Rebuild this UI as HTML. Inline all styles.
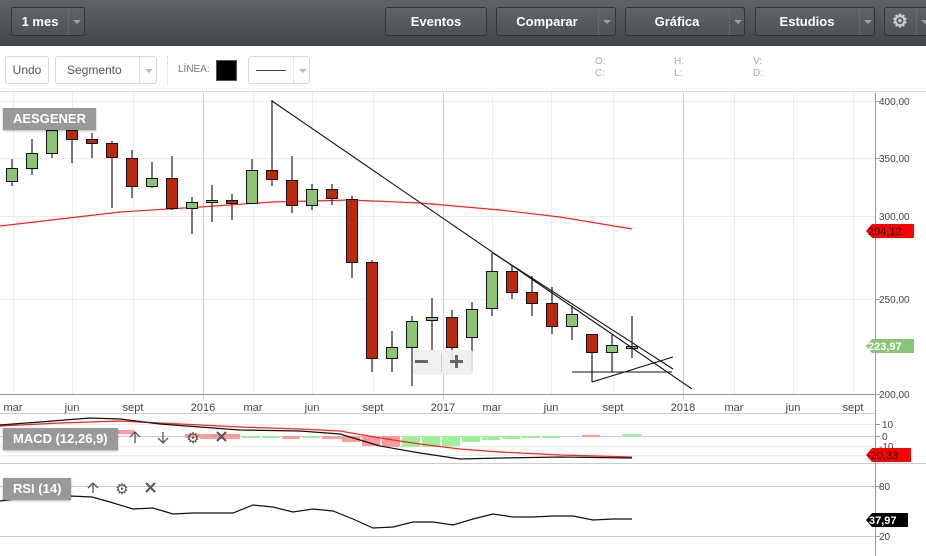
<!DOCTYPE html>
<html><head><meta charset="utf-8"><style>
*{margin:0;padding:0;box-sizing:border-box}
body{width:926px;height:556px;overflow:hidden;background:#fff;font-family:"Liberation Sans",sans-serif;position:relative}
.top{position:absolute;left:0;top:0;width:926px;height:46px;background:linear-gradient(#5c636b,#40474d)}
.btn{position:absolute;top:7px;height:29px;border:1px solid #2f353a;border-radius:3px;color:#fff;font-weight:bold;font-size:13px;line-height:27px;background:rgba(255,255,255,0.03)}
.btn .t{position:absolute;left:0;text-align:center}
.btn .d{position:absolute;top:0;bottom:0;border-left:1px dotted #777}
.btn .a{position:absolute;top:12px;width:0;height:0;border-left:4px solid transparent;border-right:4px solid transparent;border-top:4px solid #9aa0a6}
.tb{position:absolute;left:0;top:46px;width:926px;height:46px;background:#fff;border-bottom:1px solid #ddd}
.w{position:absolute;top:10px;height:28px;border:1px solid #d8d8d8;border-radius:3px;font-size:12px;color:#555;line-height:26px}
.lbl{position:absolute;background:#999;color:#fff;font-weight:bold;font-size:13px;padding:0 10px;height:22px;line-height:22px;box-shadow:0 1px 2px rgba(0,0,0,.3)}
.ohl{position:absolute;font-size:10px;color:#aaa;line-height:12px}
</style></head><body>
<div class="top">
 <div class="btn" style="left:11px;width:74px"><span class="t" style="width:56px">1 mes</span><span class="d" style="left:56px"></span><span class="a" style="left:61px"></span></div>
 <div class="btn" style="left:385px;width:102px"><span class="t" style="width:100px">Eventos</span></div>
 <div class="btn" style="left:496px;width:120px"><span class="t" style="width:100px">Comparar</span><span class="d" style="left:101px"></span><span class="a" style="left:106px"></span></div>
 <div class="btn" style="left:625px;width:120px"><span class="t" style="width:102px">Gráfica</span><span class="d" style="left:103px"></span><span class="a" style="left:108px"></span></div>
 <div class="btn" style="left:755px;width:120px"><span class="t" style="width:102px">Estudios</span><span class="d" style="left:103px"></span><span class="a" style="left:108px"></span></div>
 <div class="btn" style="left:884px;width:50px"><span class="t" style="width:30px;font-size:18px;color:#ccc">⚙</span><span class="d" style="left:31px"></span><span class="a" style="left:36px"></span></div>
</div>
<div class="tb">
 <div class="w" style="left:5px;width:44px;text-align:center">Undo</div>
 <div class="w" style="left:55px;width:102px;padding-left:11px">Segmento<span style="position:absolute;left:83px;top:0;bottom:0;border-left:1px dotted #ccc"></span><span style="position:absolute;left:89px;top:12px;border-left:4px solid transparent;border-right:4px solid transparent;border-top:4px solid #bbb"></span></div>
 <div style="position:absolute;left:167px;top:10px;height:28px;border-left:1px dotted #ccc"></div>
 <div style="position:absolute;left:178px;top:18px;font-size:10px;color:#777">LÍNEA:</div>
 <div style="position:absolute;left:216px;top:14px;width:21px;height:21px;background:#000;border:1px solid #555"></div>
 <div class="w" style="left:248px;width:62px"><span style="position:absolute;left:7px;top:13px;width:30px;border-top:1px solid #444"></span><span style="position:absolute;left:44px;top:0;bottom:0;border-left:1px dotted #ccc"></span><span style="position:absolute;left:50px;top:12px;border-left:4px solid transparent;border-right:4px solid transparent;border-top:4px solid #bbb"></span></div>
 <div class="ohl" style="left:595px;top:10px">O:<br>C:</div>
 <div class="ohl" style="left:674px;top:10px">H:<br>L:</div>
 <div class="ohl" style="left:753px;top:10px">V:<br>D:</div>
</div>
<svg style="position:absolute;left:0;top:0" width="926" height="556" font-family="Liberation Sans,sans-serif">
<g stroke="#ececec" stroke-width="1">
<line x1="0" y1="101.5" x2="875" y2="101.5"/><line x1="0" y1="158.5" x2="875" y2="158.5"/><line x1="0" y1="216.5" x2="875" y2="216.5"/><line x1="0" y1="299.5" x2="875" y2="299.5"/>
<line x1="13.5" y1="93" x2="13.5" y2="394"/><line x1="72.5" y1="93" x2="72.5" y2="394"/><line x1="133.5" y1="93" x2="133.5" y2="394"/><line x1="253.5" y1="93" x2="253.5" y2="394"/><line x1="312.5" y1="93" x2="312.5" y2="394"/><line x1="373.5" y1="93" x2="373.5" y2="394"/><line x1="492.5" y1="93" x2="492.5" y2="394"/><line x1="551.5" y1="93" x2="551.5" y2="394"/><line x1="613.5" y1="93" x2="613.5" y2="394"/><line x1="734.5" y1="93" x2="734.5" y2="394"/><line x1="793.5" y1="93" x2="793.5" y2="394"/><line x1="853.5" y1="93" x2="853.5" y2="394"/>
<line x1="0" y1="424.5" x2="875" y2="424.5"/><line x1="0" y1="446.5" x2="875" y2="446.5"/><line x1="0" y1="455.5" x2="875" y2="455.5"/>
</g>
<g stroke="#ccc"><line x1="203.5" y1="93" x2="203.5" y2="400"/><line x1="443.5" y1="93" x2="443.5" y2="400"/><line x1="683.5" y1="93" x2="683.5" y2="400"/>
<line x1="0" y1="436.5" x2="875" y2="436.5"/><line x1="0" y1="413.5" x2="875" y2="413.5"/><line x1="0" y1="463.5" x2="926" y2="463.5"/><line x1="0" y1="486.5" x2="875" y2="486.5"/><line x1="0" y1="536.5" x2="875" y2="536.5"/></g>
<g stroke="#999"><line x1="0" y1="394.5" x2="875" y2="394.5"/><line x1="875.5" y1="93" x2="875.5" y2="556"/>
<line x1="875" y1="101.5" x2="880" y2="101.5"/><line x1="875" y1="158.5" x2="880" y2="158.5"/><line x1="875" y1="299.5" x2="880" y2="299.5"/><line x1="875" y1="394.5" x2="880" y2="394.5"/><line x1="875" y1="424.5" x2="880" y2="424.5"/><line x1="875" y1="436.5" x2="880" y2="436.5"/><line x1="875" y1="486.5" x2="880" y2="486.5"/><line x1="875" y1="536.5" x2="880" y2="536.5"/></g>
<g font-size="10" fill="#444"><text x="879" y="105">400,00</text><text x="879" y="162">350,00</text><text x="879" y="220">300,00</text><text x="879" y="303">250,00</text><text x="879" y="398">200,00</text>
<text x="882" y="428">10</text><text x="882" y="440">0</text><text x="879" y="450">-10</text><text x="879" y="490">80</text><text x="879" y="540">20</text></g>
<g font-size="11" fill="#444" text-anchor="middle"><text x="13" y="411">mar</text><text x="72" y="411">jun</text><text x="133" y="411">sept</text><text x="203" y="411">2016</text><text x="253" y="411">mar</text><text x="312" y="411">jun</text><text x="373" y="411">sept</text><text x="443" y="411">2017</text><text x="492" y="411">mar</text><text x="551" y="411">jun</text><text x="613" y="411">sept</text><text x="683" y="411">2018</text><text x="734" y="411">mar</text><text x="793" y="411">jun</text><text x="853" y="411">sept</text></g>
<polyline fill="none" stroke="#f22" stroke-width="1.2" points="0,226 60,219 120,212 200,207 272,202 350,200 420,203 500,210 560,217 632,229"/>
<g stroke="#222" stroke-width="1.2">
<line x1="12" y1="159" x2="12" y2="186"/><line x1="32" y1="139" x2="32" y2="175"/><line x1="52" y1="122" x2="52" y2="158"/><line x1="72" y1="125" x2="72" y2="163"/><line x1="92" y1="133" x2="92" y2="158"/><line x1="112" y1="141" x2="112" y2="208"/><line x1="132" y1="150" x2="132" y2="198"/><line x1="152" y1="162" x2="152" y2="188"/><line x1="172" y1="156" x2="172" y2="210"/><line x1="192" y1="197" x2="192" y2="234"/><line x1="212" y1="185" x2="212" y2="222"/><line x1="232" y1="194" x2="232" y2="220"/><line x1="252" y1="159" x2="252" y2="203"/><line x1="272" y1="100" x2="272" y2="186"/><line x1="292" y1="156" x2="292" y2="213"/><line x1="312" y1="184" x2="312" y2="210"/><line x1="332" y1="184" x2="332" y2="205"/><line x1="352" y1="196" x2="352" y2="278"/><line x1="372" y1="260" x2="372" y2="372"/><line x1="392" y1="331" x2="392" y2="372"/><line x1="412" y1="316" x2="412" y2="386"/><line x1="432" y1="298" x2="432" y2="350"/><line x1="452" y1="310" x2="452" y2="366"/><line x1="472" y1="302" x2="472" y2="372"/><line x1="492" y1="253" x2="492" y2="316"/><line x1="512" y1="265" x2="512" y2="299"/><line x1="532" y1="276" x2="532" y2="316"/><line x1="552" y1="287" x2="552" y2="334"/><line x1="572" y1="306" x2="572" y2="340"/><line x1="592" y1="334" x2="592" y2="382"/><line x1="612" y1="335" x2="612" y2="372"/><line x1="632" y1="316" x2="632" y2="358"/>
</g>
<g stroke="#111" stroke-width="1">
<g fill="#8cc476"><rect x="6.5" y="168.5" width="11" height="13"/><rect x="26.5" y="153.5" width="11" height="15"/><rect x="46.5" y="130.5" width="11" height="23"/><rect x="146.5" y="178.5" width="11" height="8"/><rect x="186.5" y="202.5" width="11" height="6"/><rect x="206.5" y="200.5" width="11" height="2"/><rect x="246.5" y="170.5" width="11" height="33"/><rect x="306.5" y="189.5" width="11" height="16"/><rect x="386.5" y="347.5" width="11" height="11"/><rect x="406.5" y="321.5" width="11" height="26"/><rect x="426.5" y="317.5" width="11" height="3"/><rect x="466.5" y="309.5" width="11" height="28"/><rect x="486.5" y="271.5" width="11" height="37"/><rect x="566.5" y="314.5" width="11" height="12"/><rect x="606.5" y="345.5" width="11" height="7"/><rect x="626.5" y="346.5" width="11" height="2"/></g>
<g fill="#b8290e"><rect x="66.5" y="130.5" width="11" height="9"/><rect x="86.5" y="139.5" width="11" height="4"/><rect x="106.5" y="143.5" width="11" height="14"/><rect x="126.5" y="158.5" width="11" height="28"/><rect x="166.5" y="178.5" width="11" height="30"/><rect x="226.5" y="200.5" width="11" height="3"/><rect x="266.5" y="170.5" width="11" height="9"/><rect x="286.5" y="180.5" width="11" height="25"/><rect x="326.5" y="189.5" width="11" height="9"/><rect x="346.5" y="199.5" width="11" height="63"/><rect x="366.5" y="262.5" width="11" height="96"/><rect x="446.5" y="317.5" width="11" height="30"/><rect x="506.5" y="271.5" width="11" height="21"/><rect x="526.5" y="292.5" width="11" height="11"/><rect x="546.5" y="303.5" width="11" height="23"/><rect x="586.5" y="334.5" width="11" height="18"/></g>
</g>
<g stroke="#111" stroke-width="1.1" fill="none">
<line x1="272" y1="101" x2="692" y2="389"/><line x1="493" y1="253" x2="673" y2="369"/><line x1="592" y1="382" x2="673" y2="357"/><line x1="572" y1="372" x2="672" y2="372"/>
</g>
<rect x="413" y="350" width="60" height="25" rx="3" fill="#eee" opacity="0.9"/><line x1="441.5" y1="353" x2="441.5" y2="372" stroke="#ccc"/>
<rect x="415" y="360" width="13" height="3" fill="#666"/><rect x="450" y="360" width="13" height="3" fill="#666"/><rect x="455" y="355" width="3" height="13" fill="#666"/>
<g fill="#ff9b9b"><rect x="110" y="430" width="25" height="4"/><rect x="185" y="434" width="15" height="4"/><rect x="200" y="434" width="40" height="5"/><rect x="282" y="436" width="18" height="3"/><rect x="322" y="436" width="20" height="3"/><rect x="342" y="436" width="18" height="6"/><rect x="362" y="436" width="18" height="10"/><rect x="382" y="436" width="18" height="11"/><rect x="582" y="435" width="18" height="2"/></g>
<g fill="#9ff09a"><rect x="242" y="436" width="18" height="2"/><rect x="262" y="436" width="18" height="2"/><rect x="302" y="436" width="18" height="2"/><rect x="402" y="436" width="18" height="11"/><rect x="422" y="436" width="18" height="11"/><rect x="442" y="436" width="18" height="10"/><rect x="462" y="436" width="18" height="6"/><rect x="482" y="436" width="18" height="4"/><rect x="502" y="436" width="18" height="3"/><rect x="522" y="436" width="18" height="2"/><rect x="542" y="436" width="18" height="2"/><rect x="622" y="434" width="20" height="2"/></g>
<polyline fill="none" stroke="#f22" stroke-width="1.2" points="0,426 60,423 120,421 180,424 240,427 300,429 340,431 380,438 420,444 460,449 500,452 560,455 632,457"/>
<polyline fill="none" stroke="#111" stroke-width="1.2" points="0,425 40,422 90,418 120,419 160,424 240,430 300,431 340,434 380,446 420,453 460,459 500,458 560,457 632,458"/>
<polyline fill="none" stroke="#111" stroke-width="1.2" points="0,501 30,497 70,496 92,497 110,502 133,509 153,508 173,514 193,513 213,513 233,513 253,505 273,507 293,512 313,509 333,511 353,519 373,528 393,527 413,522 433,522 453,525 473,519 493,514 513,517 533,517 553,516 573,516 593,520 613,519 632,519"/>
<path d="M866,231 L872,224 L914,224 L914,238 L872,238 Z" fill="#f00"/><text x="868" y="235" font-size="11" fill="#111">294,12</text>
<path d="M866,346 L872,339 L914,339 L914,353 L872,353 Z" fill="#8cc476"/><text x="868" y="350" font-size="11" fill="#fff" font-weight="bold">223,97</text>
<path d="M866,455 L872,448 L911,448 L911,462 L872,462 Z" fill="#f00"/><text x="867" y="459" font-size="11" fill="#111">-20,33</text>
<path d="M866,520 L872,513 L908,513 L908,527 L872,527 Z" fill="#000"/><text x="869" y="524" font-size="11" fill="#fff" font-weight="bold">37,97</text>
<g stroke="#555" stroke-width="1.3" fill="none">
<path d="M135,443 V432 M130,437 L135,432 L140,437"/><path d="M163,432 V443 M158,438 L163,443 L168,438"/>
<path d="M217,432 L226,441 M226,432 L217,441" stroke-width="2"/><path d="M93,493 V483 M88,488 L93,483 L98,488"/><path d="M146,483 L155,492 M155,483 L146,492" stroke-width="2"/>
</g>
<text x="193" y="443" font-size="15" fill="#555" text-anchor="middle">⚙</text>
<text x="122" y="494" font-size="15" fill="#555" text-anchor="middle">⚙</text>
</svg>
<div class="lbl" style="left:3px;top:108px">AESGENER</div>
<div class="lbl" style="left:3px;top:428px">MACD (12,26,9)</div>
<div class="lbl" style="left:3px;top:478px">RSI (14)</div>
</body></html>
